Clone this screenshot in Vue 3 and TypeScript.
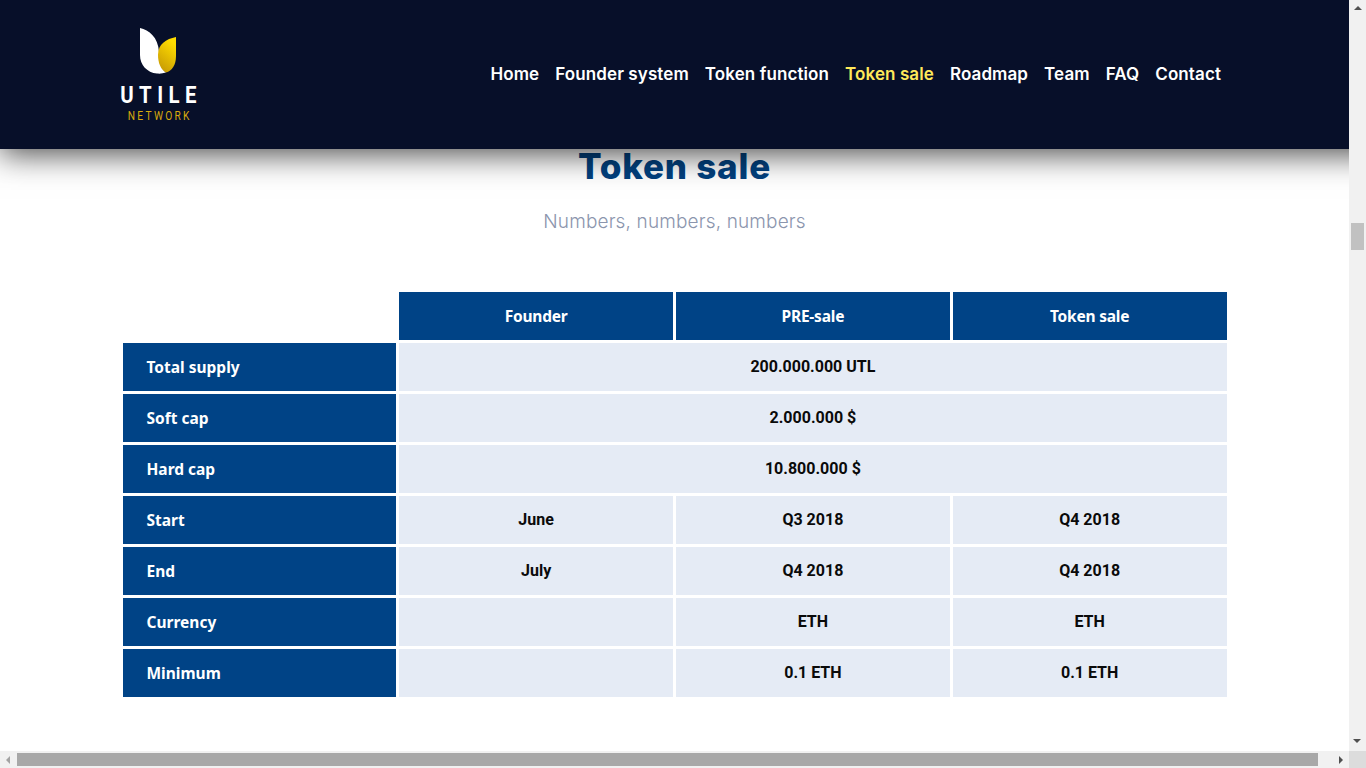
<script setup lang="ts">
const nav = ['Home', 'Founder system', 'Token function', 'Token sale', 'Roadmap', 'Team', 'FAQ', 'Contact']
const active = 'Token sale'
const columns = ['Founder', 'PRE-sale', 'Token sale']
const rows: { label: string; span?: string; cells?: string[] }[] = [
  { label: 'Total supply', span: '200.000.000 UTL' },
  { label: 'Soft cap', span: '2.000.000 $' },
  { label: 'Hard cap', span: '10.800.000 $' },
  { label: 'Start', cells: ['June', 'Q3 2018', 'Q4 2018'] },
  { label: 'End', cells: ['July', 'Q4 2018', 'Q4 2018'] },
  { label: 'Currency', cells: ['', 'ETH', 'ETH'] },
  { label: 'Minimum', cells: ['', '0.1 ETH', '0.1 ETH'] },
]
</script>

<template>
  <div class="window">
    <div class="viewport">
      <header class="header">
        <div class="logo">
          <svg class="mark" width="40" height="48" viewBox="0 0 40 48">
            <defs>
              <linearGradient id="gold" x1="0.7" y1="0.1" x2="0.3" y2="1">
                <stop offset="0" stop-color="#ffdc00" />
                <stop offset="1" stop-color="#c79a04" />
              </linearGradient>
            </defs>
            <path d="M1 1 C10 3 19 10 20 25 C20.5 34 22 42 27 45.6 C24 46.5 21 47 18 46.6 C8 45.5 1 38 1 28 Z" fill="#fff" />
            <path d="M37 10 C27 12 19 17 19 28 C19 36 22 43 27 45.5 C33 44 37 38 37 29 Z" fill="url(#gold)" />
          </svg>
          <div class="wordmark">UTILE</div>
          <div class="network">NETWORK</div>
        </div>
        <nav class="nav">
          <a v-for="item in nav" :key="item" class="nav-link" :class="{ active: item === active }">{{ item }}</a>
        </nav>
      </header>
      <main class="main">
        <h2 class="title">Token sale</h2>
        <p class="subtitle">Numbers, numbers, numbers</p>
        <table class="sale">
          <colgroup>
            <col class="c1" /><col class="c2" /><col class="c2" /><col class="c2" />
          </colgroup>
          <thead>
            <tr>
              <td class="blank"></td>
              <th v-for="c in columns" :key="c">{{ c }}</th>
            </tr>
          </thead>
          <tbody>
            <tr v-for="r in rows" :key="r.label">
              <th class="label">{{ r.label }}</th>
              <td v-if="r.span" colspan="3">{{ r.span }}</td>
              <template v-else>
                <td v-for="(c, i) in r.cells" :key="i">{{ c }}</td>
              </template>
            </tr>
          </tbody>
        </table>
      </main>
    </div>
    <div class="vbar">
      <span class="arrow up"></span>
      <span class="vthumb"></span>
      <span class="arrow down"></span>
    </div>
    <div class="hbar">
      <span class="arrow left"></span>
      <span class="hthumb"></span>
      <span class="arrow right"></span>
    </div>
    <div class="corner"></div>
  </div>
</template>

<style>
html, body { margin: 0; overflow: hidden; background: #fff; }
</style>

<style scoped>
.window {
  width: 1366px;
  height: 768px;
  display: grid;
  grid-template-columns: 1349px 17px;
  grid-template-rows: 751px 17px;
  overflow: hidden;
}
.viewport { overflow: hidden; background: #fff; }
.header {
  position: relative;
  z-index: 2;
  height: 149px;
  width: 1389px;
  box-sizing: border-box;
  background: #070f29;
  box-shadow: 0 5px 30px rgba(0, 0, 0, 0.72);
  display: flex;
  justify-content: space-between;
  align-items: center;
  padding: 0 168px 0 119px;
}
.logo { width: 78px; display: flex; flex-direction: column; align-items: center; }
.mark { display: block; margin-left: 1px; }
.wordmark {
  font: 700 24px/22px "Roboto", "Liberation Sans", sans-serif;
  letter-spacing: 6.4px;
  margin-right: -6.4px;
  color: #fff;
  margin-top: 9px;
  transform: scaleX(0.85);
}
.network {
  font: 400 12px/11px "Roboto", "Liberation Sans", sans-serif;
  letter-spacing: 2.7px;
  margin-right: -2.7px;
  color: #d8aa0c;
  margin-top: 5px;
  transform: scaleX(0.85);
}
.nav { display: flex; gap: 16px; margin-top: -1px; }
.nav-link {
  font: 600 17px/24px "Inter", "Noto Sans", sans-serif;
  color: #fff;
  letter-spacing: 0.1px;
}
.nav-link.active { color: #ffe95a; }
.main { position: relative; }
.title {
  margin: -1px 0 0;
  text-align: center;
  font: 800 35px/36px "Inter", "Noto Sans", sans-serif;
  letter-spacing: 0.8px;
  color: #02417f;
}
.subtitle {
  margin: 27px 0 0;
  text-align: center;
  font: 300 19px/22px "Inter", "Noto Sans", sans-serif;
  letter-spacing: 0.15px;
  color: #8b95ad;
}
.sale {
  width: 1110px;
  margin: 56px auto 0;
  border-collapse: separate;
  border-spacing: 3px;
  table-layout: fixed;
}
.c1, .c2 { width: 25%; }
.sale th, .sale td {
  height: 48px;
  padding: 0;
  text-align: center;
  font: 700 16px/20px "Roboto", "Liberation Sans", sans-serif;
}
.sale thead th {
  background: #004386;
  color: #fff;
  font: 700 15.5px/20px "Noto Sans", "Open Sans", sans-serif;
  letter-spacing: -0.2px;
}
.sale td.blank { background: transparent; }
.sale tbody td { background: #e5ebf5; color: #0a0a0a; }
.sale th.label {
  background: #004386;
  color: #fff;
  text-align: left;
  padding-left: 24px;
  box-sizing: border-box;
  font: 700 15.5px/20px "Noto Sans", "Open Sans", sans-serif;
}
.vbar {
  background: #f1f1f1;
  display: flex;
  flex-direction: column;
  align-items: center;
  position: relative;
}
.vthumb {
  position: absolute;
  top: 223px;
  left: 2px;
  width: 13px;
  height: 27px;
  background: #c1c1c1;
}
.arrow { width: 0; height: 0; display: block; border-style: solid; border-color: transparent; }
.up { border-width: 0 4px 4px; border-bottom-color: #505050; margin-top: 6px; }
.down { border-width: 4px 4px 0; border-top-color: #505050; position: absolute; left: 4px; top: 739px; }
.hbar {
  background: #f1f1f1;
  display: flex;
  align-items: center;
  position: relative;
}
.left { border-width: 4px 4px 4px 0; border-right-color: #a3a3a3; position: absolute; left: 6px; top: 5px; }
.right { border-width: 4px 0 4px 4px; border-left-color: #505050; position: absolute; left: 1339px; top: 5px; }
.hthumb {
  position: absolute;
  left: 17px;
  top: 2px;
  width: 1301px;
  height: 13px;
  background: #a8a8a8;
}
.corner { background: #dcdcdc; }
</style>
